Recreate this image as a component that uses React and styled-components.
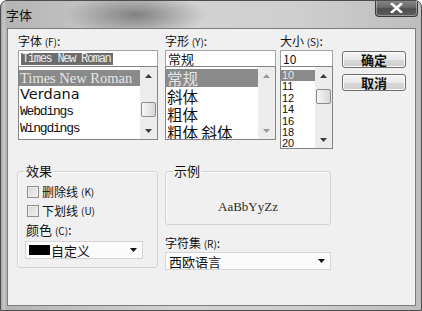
import React from 'react';
import styled, { createGlobalStyle } from 'styled-components';

const GlobalStyle = createGlobalStyle`
html, body {
  margin: 0;
  padding: 0;
  background: #ffffff;
}
body {
  font-family: "Noto Sans CJK SC", "DejaVu Sans", sans-serif;
  font-size: 12px;
  color: #111;
}
`

const Window = styled.div`
width: 422px;
height: 311px;
box-sizing: border-box;
display: flex;
flex-direction: column;
border: 1px solid #4c4c4c;
border-radius: 7px 7px 0 0;
background:
  radial-gradient(ellipse 70px 22px at 135px 14px, rgba(110,110,110,0.8), rgba(110,110,110,0)),
  linear-gradient(90deg, #a8a8a8 0px, #c9c9c9 3px, #b4b4b4 5px, #d2d2d2 40%, #cfcfcf 70%, #bdbdbd 100%);
overflow: hidden;
`

const TitleBar = styled.div`
height: 27px;
flex: none;
display: flex;
justify-content: space-between;
align-items: flex-start;
padding: 0 3px 0 5px;
`

const Title = styled.div`
margin-top: 6px;
font-size: 13px;
line-height: 16px;
color: #111;
`

const CloseButton = styled.div`
width: 43px;
height: 17px;
box-sizing: border-box;
margin-top: -1px;
display: flex;
align-items: center;
justify-content: center;
border: 1px solid #3a3a3a;
border-top: none;
border-radius: 0 0 4px 4px;
background: linear-gradient(180deg, #8a8a8a 0%, #6a6a6a 45%, #4e4e4e 55%, #5e5e5e 100%);
box-shadow: inset 0 0 0 1px rgba(255,255,255,0.35);
`

const Client = styled.div`
flex: 1;
margin: 0 5px 4px 6px;
border: 1px solid #7c7c7c;
background: #f0f0f0;
padding: 5px 0 0 10px;
display: flex;
flex-direction: column;
`

const TopRow = styled.div`
display: flex;
align-items: flex-start;
`

const Column = styled.div`
width: ${p => p.$w}px;
margin-left: ${p => p.$ml || 0}px;
display: flex;
flex-direction: column;
`

const Label = styled.div`
font-size: 12px;
line-height: 14px;
height: 14px;
margin-top: ${p => p.$mt || 0}px;
color: #111;
white-space: nowrap;
`

const Key = styled.span`
font-size: 10px;
letter-spacing: 0;
`

const TextBox = styled.div`
margin-top: 2px;
height: 16px;
box-sizing: border-box;
border: 1px solid #a4a4a4;
border-bottom: none;
background: #fff;
display: flex;
align-items: center;
padding-left: 2px;
font-size: ${p => p.$size || 12}px;
line-height: 14px;
white-space: nowrap;
overflow: hidden;
`

const Selected = styled.span`
background: #6c6c6c;
color: #ececec;
font-family: "Liberation Mono", monospace;
font-size: 12px;
letter-spacing: -1.3px;
line-height: 12px;
padding: 0 2px 0 1px;
`

const ListBox = styled.div`
height: ${p => p.$h}px;
box-sizing: border-box;
border: 1px solid #848484;
background: #fff;
display: flex;
overflow: hidden;
`

const Items = styled.div`
flex: 1;
padding-top: ${p => p.$pt || 3}px;
overflow: hidden;
`

const Item = styled.div`
height: ${p => p.$h}px;
line-height: ${p => p.$h}px;
padding-left: 1px;
white-space: nowrap;
overflow: hidden;
font-family: ${p => p.$font || '"Noto Sans CJK SC", sans-serif'};
font-size: ${p => p.$size}px;
letter-spacing: ${p => p.$ls || 0}px;
background: ${p => (p.$selected ? '#8a8a8a' : 'transparent')};
color: ${p => (p.$selected ? '#e6e6e6' : '#111')};
`

const ScrollBar = styled.div`
width: 17px;
flex: none;
background: #ececec;
display: flex;
flex-direction: column;
`

const ArrowBox = styled.div`
height: 17px;
flex: none;
display: flex;
align-items: center;
justify-content: center;
`

const Track = styled.div`
flex: 1;
padding-top: ${p => p.$offset}px;
`

const Thumb = styled.div`
width: 15px;
height: 15px;
margin-left: 1px;
box-sizing: border-box;
border: 1px solid #8c8c8c;
border-radius: 2px;
background: linear-gradient(90deg, #f6f6f6 0%, #e8e8e8 50%, #d6d6d6 100%);
`

const ButtonColumn = styled.div`
margin-left: 9px;
margin-top: 17px;
display: flex;
flex-direction: column;
gap: 6px;
`

const Button = styled.div`
width: 64px;
height: 17px;
box-sizing: border-box;
border: 1px solid #6e6e6e;
border-radius: 3px;
background: linear-gradient(180deg, #f4f4f4 0%, #e8e8e8 50%, #d8d8d8 51%, #cfcfcf 100%);
box-shadow: inset 0 0 0 1px #fbfbfb;
display: flex;
align-items: center;
justify-content: center;
font-size: 13px;
font-weight: 600;
color: #111;
`

const BottomRow = styled.div`
display: flex;
align-items: flex-start;
margin-top: 15px;
`

const GroupBox = styled.fieldset`
width: ${p => p.$w}px;
height: ${p => p.$h}px;
margin: 0 0 0 ${p => p.$ml || 0}px;
box-sizing: border-box;
border: 1px solid #d2d2d2;
border-radius: 3px;
box-shadow: inset 1px 1px 0 #fbfbfb;
padding: 0 7px;
`

const Legend = styled.legend`
padding: 0 1px;
font-size: 13px;
line-height: 14px;
color: #111;
`

const CheckRow = styled.div`
display: flex;
align-items: center;
gap: 3px;
height: 13px;
margin-top: ${p => p.$mt}px;
margin-left: 2px;
font-size: 12px;
white-space: nowrap;
`

const CheckBox = styled.div`
width: 12px;
height: 12px;
box-sizing: border-box;
border: 1px solid #8e8e8e;
background: linear-gradient(135deg, #d6d6d6 0%, #f2f2f2 100%);
box-shadow: inset 0 0 0 1px #ececec;
`

const GroupLabel = styled(Label)`
margin-left: 1px;
font-size: 13px;
`

const ComboBox = styled.div`
width: ${p => p.$w}px;
height: 18px;
box-sizing: border-box;
margin-top: ${p => p.$mt}px;
border: 1px solid #d4d4d4;
background: #fbfbfb;
display: flex;
align-items: center;
padding: 0 5px 0 3px;
font-size: 13px;
white-space: nowrap;
`

const ComboText = styled.span`
flex: 1;
`

const Swatch = styled.div`
width: 21px;
height: 10px;
background: #000;
margin-right: 1px;
`

const SampleText = styled.div`
padding-top: 21px;
text-align: center;
line-height: 16px;
font-family: "Liberation Serif", serif;
font-size: 13px;
color: #2a2a2a;
`

const RightColumn = styled.div`
margin-left: 7px;
display: flex;
flex-direction: column;
`

function Up({ color = '#3c3c3c' }) {
    return (
        <svg width="7" height="4" viewBox="0 0 7 4"><path d="M3.5 0 L7 4 L0 4 Z" fill={color} /></svg>
    );
}

function Down({ color = '#3c3c3c' }) {
    return (
        <svg width="7" height="4" viewBox="0 0 7 4"><path d="M0 0 L7 0 L3.5 4 Z" fill={color} /></svg>
    );
}

function Scroll({ offset, thumb = true, arrow }) {
    return (
        <ScrollBar>
            <ArrowBox><Up color={arrow} /></ArrowBox>
            <Track $offset={offset}>{thumb && <Thumb />}</Track>
            <ArrowBox><Down color={arrow} /></ArrowBox>
        </ScrollBar>
    );
}

const sizes = ['10', '11', '12', '14', '16', '18', '20'];
const serif = '"Liberation Serif", serif';
const mono = '"Liberation Mono", monospace';

function App() {
    return (
        <>
            <GlobalStyle />
            <Window>
                <TitleBar>
                    <Title>字体</Title>
                    <CloseButton>
                        <svg width="13" height="10" viewBox="0 0 13 10">
                            <path d="M2 1 L11 9 M11 1 L2 9" stroke="#fff" strokeWidth="2.6" strokeLinecap="square" />
                        </svg>
                    </CloseButton>
                </TitleBar>
                <Client>
                    <TopRow>
                        <Column $w={140}>
                            <Label>字体 <Key>(F)</Key>:</Label>
                            <TextBox><Selected>Times New Roman</Selected></TextBox>
                            <ListBox $h={74}>
                                <Items $pt={3}>
                                    <Item $h={16} $size={14.5} $font={serif} $selected>Times New Roman</Item>
                                    <Item $h={17} $size={14.5} $font='"DejaVu Sans", sans-serif'>Verdana</Item>
                                    <Item $h={17} $size={13} $ls={-1.2} $font={mono}>Webdings</Item>
                                    <Item $h={17} $size={13} $ls={-1.2} $font={mono}>Wingdings</Item>
                                </Items>
                                <Scroll offset={18} />
                            </ListBox>
                        </Column>
                        <Column $w={111} $ml={7}>
                            <Label>字形 <Key>(Y)</Key>:</Label>
                            <TextBox $size={13}>常规</TextBox>
                            <ListBox $h={74}>
                                <Items $pt={2}>
                                    <Item $h={18} $size={15.5} $selected>常规</Item>
                                    <Item $h={18} $size={15.5}>斜体</Item>
                                    <Item $h={18} $size={15.5}>粗体</Item>
                                    <Item $h={18} $size={15.5}>粗体 斜体</Item>
                                </Items>
                                <Scroll thumb={false} arrow="#9a9a9a" />
                            </ListBox>
                        </Column>
                        <Column $w={53} $ml={4}>
                            <Label>大小 <Key>(S)</Key>:</Label>
                            <TextBox $size={12}>10</TextBox>
                            <ListBox $h={83}>
                                <Items $pt={3}>
                                    {sizes.map((s, i) => (
                                        <Item key={s} $h={11.4} $size={11} $font='"Liberation Sans", sans-serif' $selected={i === 0}>{s}</Item>
                                    ))}
                                </Items>
                                <Scroll offset={5} />
                            </ListBox>
                        </Column>
                        <ButtonColumn>
                            <Button>确定</Button>
                            <Button>取消</Button>
                        </ButtonColumn>
                    </TopRow>
                    <BottomRow>
                        <GroupBox $w={141} $h={104} $ml={-1}>
                            <Legend>效果</Legend>
                            <CheckRow $mt={7}><CheckBox />删除线 <Key>(K)</Key></CheckRow>
                            <CheckRow $mt={6}><CheckBox />下划线 <Key>(U)</Key></CheckRow>
                            <GroupLabel $mt={6}>颜色 <Key>(C)</Key>:</GroupLabel>
                            <ComboBox $w={118} $mt={4}>
                                <Swatch />
                                <ComboText>自定义</ComboText>
                                <Down color="#111" />
                            </ComboBox>
                        </GroupBox>
                        <RightColumn>
                            <GroupBox $w={166} $h={61}>
                                <Legend>示例</Legend>
                                <SampleText>AaBbYyZz</SampleText>
                            </GroupBox>
                            <Label $mt={11}>字符集 <Key>(R)</Key>:</Label>
                            <ComboBox $w={166} $mt={2}>
                                <ComboText>西欧语言</ComboText>
                                <Down color="#111" />
                            </ComboBox>
                        </RightColumn>
                    </BottomRow>
                </Client>
            </Window>
        </>
    );
}

export default App;
